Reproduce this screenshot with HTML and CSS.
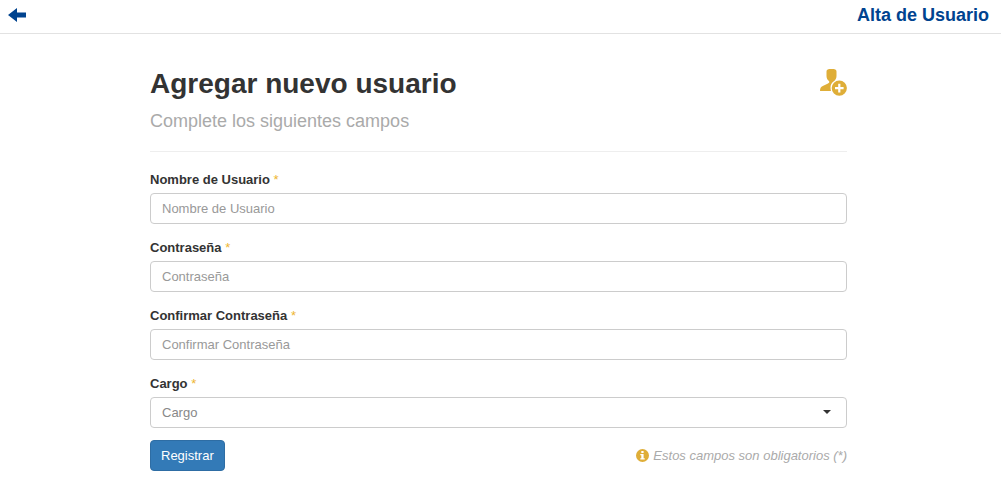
FILE: index.html
```html
<!DOCTYPE html>
<html lang="es">
<head>
<meta charset="utf-8">
<meta name="viewport" content="width=device-width, initial-scale=1">
<title>Alta de Usuario</title>
<link rel="stylesheet" href="styles.css">
</head>
<body>
<header class="topbar">
  <a class="back" href="#" aria-label="Volver">
    <svg class="back-icon" viewBox="0 0 18 14" aria-hidden="true"><path d="M0 7L9 0V4.500H18V9.500H9V14Z"/></svg>
  </a>
  <span class="topbar-title">Alta de Usuario</span>
</header>
<main class="page">
  <div class="heading">
    <div>
      <h1 class="title">Agregar nuevo usuario</h1>
      <p class="subtitle">Complete los siguientes campos</p>
    </div>
    <svg class="user-icon" viewBox="0 0 28 28" aria-hidden="true">
      <path d="M7.500 3.500C7.500 1.500 9 1 12.500 1S17.500 1.500 17.500 3.500V8C17.500 10.500 16.300 12 15.200 13C12.800 14.300 11.500 16.800 11.500 19.500C11.500 20.800 11.700 21.900 12 23H1C1 20.500 1.800 19 3.800 18.100L9 15.500C10 15 10.300 14.500 10.300 13.500C8.700 12 7.500 10.500 7.500 8Z"/>
      <path fill-rule="evenodd" d="M20.300 12.500A7.600 7.600 0 1 1 20.300 27.700A7.600 7.600 0 1 1 20.300 12.500ZM19.200 15.800V19H16V21.200H19.200V24.400H21.400V21.200H24.600V19H21.400V15.800Z"/>
    </svg>
  </div>
  <form class="form">
    <div class="field">
      <label class="label" for="usuario">Nombre de Usuario <span class="required">*</span></label>
      <input class="control" id="usuario" type="text" placeholder="Nombre de Usuario">
    </div>
    <div class="field">
      <label class="label" for="clave">Contraseña <span class="required">*</span></label>
      <input class="control" id="clave" type="password" placeholder="Contraseña">
    </div>
    <div class="field">
      <label class="label" for="confirmar">Confirmar Contraseña <span class="required">*</span></label>
      <input class="control" id="confirmar" type="password" placeholder="Confirmar Contraseña">
    </div>
    <div class="field">
      <label class="label" for="cargo">Cargo <span class="required">*</span></label>
      <div class="select-wrap">
        <select class="control select" id="cargo"><option>Cargo</option></select>
        <svg class="caret" viewBox="0 0 8 4" aria-hidden="true"><path d="M0 0H8L4 4Z"/></svg>
      </div>
    </div>
    <div class="actions">
      <button class="submit" type="button">Registrar</button>
      <p class="note">
        <svg class="info-icon" viewBox="0 0 13 13" aria-hidden="true"><path fill-rule="evenodd" d="M6.500 0A6.500 6.500 0 1 1 6.500 13A6.500 6.500 0 1 1 6.500 0ZM5.300 2V4H7.600V2ZM4.300 5V6.200H5.300V9.300H4.300V10.500H8.700V9.300H7.600V5Z"/></svg>
        <em>Estos campos son obligatorios (*)</em>
      </p>
    </div>
  </form>
</main>
</body>
</html>
```
FILE: styles.css
```css
* { box-sizing: border-box; }

body {
  margin: 0;
  background: #fff;
  color: #333;
  font-family: "Liberation Sans", Arial, sans-serif;
  font-size: 13px;
  line-height: 18px;
}

.topbar {
  display: flex;
  justify-content: space-between;
  align-items: center;
  padding: 3px 12px 6px 8px;
  border-bottom: 1px solid #e2e2e2;
  color: #00438f;
}

.back { display: block; color: inherit; }
.back-icon { display: block; width: 18px; height: 14px; fill: currentColor; }
.topbar-title { font-size: 18px; font-weight: bold; line-height: 24px; }

.page { padding: 34px 154px 22px 150px; }

.heading {
  display: flex;
  justify-content: space-between;
  align-items: flex-start;
  padding-bottom: 18px;
  border-bottom: 1px solid #eee;
}

.title { margin: 0; font-size: 28px; font-weight: bold; line-height: 32px; }
.subtitle { margin: 9px 0 0; color: #aaa; font-size: 18px; line-height: 24px; }
.user-icon { width: 28px; height: 28px; fill: #dfae38; }

.form { display: grid; gap: 15px; padding-top: 19px; }
.field { display: grid; gap: 4px; }
.label { font-weight: bold; }
.required { color: #eeb52f; font-weight: normal; }

.control {
  display: block;
  width: 100%;
  height: 31px;
  padding: 0 11px;
  border: 1px solid #ccc;
  border-radius: 4px;
  background: #fff;
  color: #555;
  font: inherit;
}

.control::placeholder { color: #999; opacity: 1; }

.select-wrap { position: relative; }
.select { appearance: none; color: #888; }

.caret {
  position: absolute;
  top: 13px;
  right: 16px;
  width: 8px;
  height: 4px;
  fill: #333;
  pointer-events: none;
}

.actions {
  display: flex;
  justify-content: space-between;
  align-items: center;
  margin-top: -3px;
}

.submit {
  height: 31px;
  padding: 0 10px;
  border: 1px solid #2e6da4;
  border-radius: 4px;
  background: #337ab7;
  color: #fff;
  font: inherit;
}

.note { display: flex; align-items: center; gap: 4px; margin: 0; color: #aaa; }
.info-icon { width: 13px; height: 13px; fill: #dfae38; }
```
